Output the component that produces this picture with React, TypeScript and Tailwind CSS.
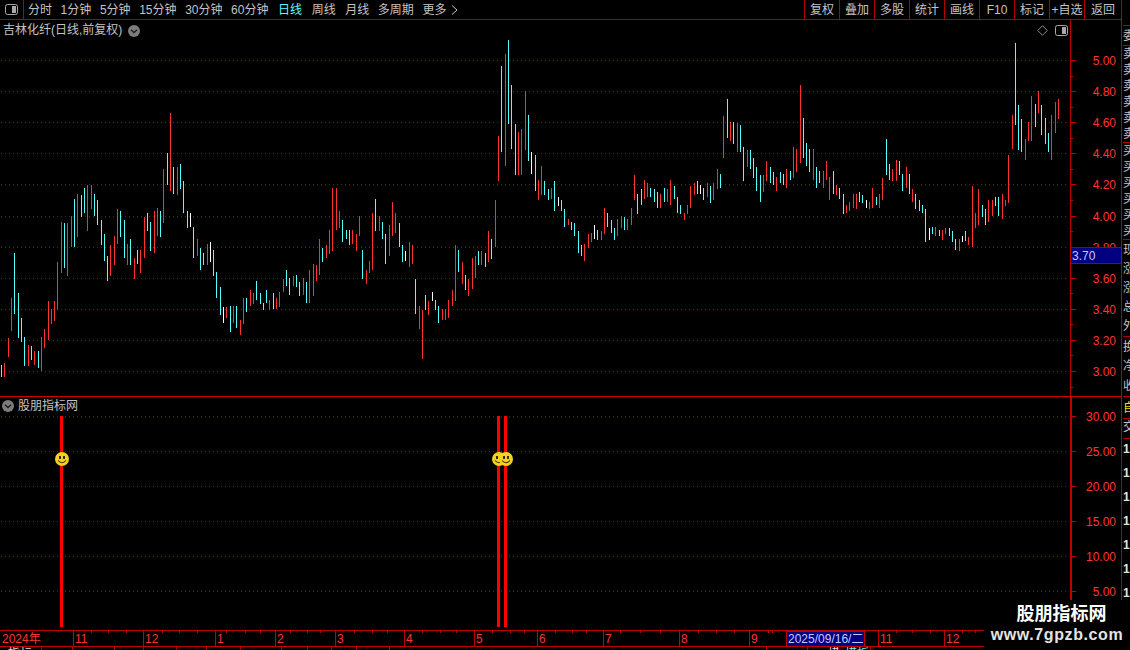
const RED = "#ff3232";
const CYAN = "#54ffff";
const GRID = "#960000";
const AXIS = "#c00000";

const FONT = "font-['Liberation_Sans','Noto_Sans_CJK_SC',sans-serif]";
const SVG_FONT = "Liberation Sans, Noto Sans CJK SC, sans-serif";

// bars read off the picture: colour, x, top, bottom in 3x crop coordinates
const BARS_A =
  "c4,780,816 r13,774,816 r25,699,756 r34,579,678 c43,444,627 c55,564,699 c64,639,711 c73,696,783 r85,720,783 c94,723,765 r103,738,780 c115,738,789 r124,696,798 r133,672,729 r145,588,705 r154,612,657 r163,588,648 r172,471,615 r184,351,504 c193,354,489 r202,354,513 r214,333,426 c223,282,426 r232,267,396 c244,270,336 c253,249,324 r262,240,378 r274,240,312 c283,267,333 c292,285,360 c304,345,420 c313,387,468 c322,453,528 r331,420,513 r343,393,480 r352,312,417 c361,318,396 c373,345,459 r382,417,480 c391,402,480 r403,459,522 c412,435,477 r421,435,504 r433,336,459 c442,324,378 c451,351,438 r463,318,444 r472,309,393 c481,318,396 r490,192,354 c502,144,240 r511,24,258 c520,186,267 r532,186,270 c541,177,252 c550,228,324 c562,318,369 w571,324,366 c580,366,459 r592,402,453 c601,429,495 c610,444,480 r622,417,480 w631,411,471 c640,435,513 c649,501,579 c661,546,630 w670,606,654 r679,606,639 c691,603,681 r700,603,654 c709,603,669 r721,645,690 r730,579,657 c739,579,621 r751,555,603 r760,564,597 c769,528,585 c781,564,597 c790,594,615 c799,555,594 r808,585,615 c820,564,612 r829,579,612 r838,561,606 r850,522,561 c859,495,543 c868,519,570 r880,513,543 c889,510,546 c898,531,573 r910,519,570 c919,531,594 r928,495,594 r940,477,573 r949,480,528 r958,402,510 c967,429,471 r979,420,459 r988,375,447 r997,249,438 r1009,249,375 r1018,318,369 c1027,345,411 c1039,375,402 c1048,375,420";
const BARS_B =
  "r7,420,462 r19,432,483 r28,378,438 c37,480,567 r49,540,582 r58,513,549 r67,369,540 c76,327,423 r88,378,423 c97,396,447 c106,432,522 r118,405,498 r127,336,438 r136,369,429 c148,399,471 c157,465,516 w166,483,513 r178,456,531 r187,465,522 c196,567,672 r208,648,717 r217,660,807 c226,615,660 r235,633,675 w247,606,633 c256,630,660 c265,648,699 r277,657,690 r286,657,690 r295,630,684 r307,600,648 r316,465,633 c325,480,546 r337,516,582 c346,555,600 r355,567,618 r367,504,597 r376,498,564 c385,483,525 r394,483,525 c406,489,531 r415,423,516 c424,447,507 r436,330,471 r445,138,273 c454,-72,186 r466,-108,228 c475,-150,102 c484,-15,177 c496,102,255 r505,126,255 r514,117,255 r526,3,180 c535,75,213 w544,186,252 c556,195,303 r565,270,330 r574,228,315 c583,273,315 c595,297,330 r604,294,327 c613,273,363 w625,321,348 c634,330,363 c643,357,411 r655,387,405 c664,396,420 c673,399,438 c685,423,489 c694,465,498 r703,462,513 r715,432,474 r724,429,456 w733,405,447 c742,420,450 r754,423,450 r763,354,432 c772,369,411 c784,390,429 c793,414,450 r802,387,438 r814,378,414 c823,381,420 r832,387,420 r844,354,405 r853,255,330 c862,312,372 c874,297,345 r883,270,327 r892,279,321 c901,294,321 c913,297,336 c922,306,354 r931,312,354 c943,294,336 r952,297,336 r961,270,345 c973,288,327 c982,321,369 c991,345,372 r1003,369,390 r1012,345,372 r1021,288,354 r1033,279,315 c1042,273,312";
const BARS_C =
  "w0,315,342 c10,324,360 r22,309,351 c31,318,369 r40,309,360 r52,267,327 c61,282,324 r70,108,234 c82,57,174 r91,126,183 c100,126,192 r112,129,216 c121,135,216 c130,201,303 r142,210,261 c151,210,267 c160,234,294 c169,261,333 c181,285,366 r190,285,336 r199,243,303 c211,261,309 c220,276,315 r229,291,333 c241,276,309 c250,282,315 r259,267,324 c271,273,300 r280,201,294 r289,207,276 r301,15,249 c310,114,234 c319,189,258 c328,207,276 r340,207,300 c349,261,324 c358,273,309 r370,273,324 r379,243,300 r388,291,360 c400,273,342 r409,315,345 c418,324,357 c430,342,402 r439,375,399 r448,366,393 r460,342,384 r469,342,387 c478,336,366 c487,345,369 w499,360,384 r508,366,387 r517,324,384 c529,351,375 r538,342,384 r547,294,360 c559,177,285 c568,252,300 r577,267,303 r589,240,303 c598,243,285 c607,282,333 r619,261,324 c628,282,342 r637,327,366 c646,342,387 c658,360,393 c667,375,399 c676,387,486 w688,444,480 c697,441,462 r706,441,468 c718,450,468 r727,450,480 r736,444,462 c748,444,468 c757,453,486 c766,477,510 r778,477,513 w787,468,486 c796,453,483 r805,471,495 r817,318,501 r826,399,444 r835,327,435 c847,375,411 c856,387,435 r865,360,426 r877,360,408 c886,351,378 c895,351,408 r907,342,417 r916,360,378 r925,225,369 r937,105,207 c946,-111,135 c955,75,210 c964,117,216 r976,177,240 r985,126,183 r994,48,183 c1006,72,141 r1015,33,99 c1024,75,165 c1036,114,192 c1045,159,216 r1054,105,240 r1066,66,159 r1075,57,117";

function parseBars(src: string, ox: number, oy: number) {
  return src.split(" ").map((s) => {
    const [x, top, bottom] = s.slice(1).split(",").map(Number);
    const fill = s[0] === "r" ? RED : s[0] === "c" ? CYAN : "#ffffff";
    return {
      x: Math.floor(ox + x / 3),
      y: Math.round(oy + top / 3),
      h: Math.round((bottom - top) / 3),
      fill,
    };
  });
}

const bars = [
  ...parseBars(BARS_A, 0, 105),
  ...parseBars(BARS_B, 350, 90),
  ...parseBars(BARS_C, 700, 80),
];

const PRICES = ["5.00", "4.80", "4.60", "4.40", "4.20", "4.00", "3.80", "3.60", "3.40", "3.20", "3.00"];
const LEVELS = ["30.00", "25.00", "20.00", "15.00", "10.00", "5.00"];
const TABS = ["分时", "1分钟", "5分钟", "15分钟", "30分钟", "60分钟"];
const BUTTONS = ["复权", "叠加", "多股", "统计", "画线", "F10", "标记", "+自选", "返回"];
const MONTHS = [
  { x: 73, label: "11" },
  { x: 143, label: "12" },
  { x: 215, label: "1" },
  { x: 275, label: "2" },
  { x: 335, label: "3" },
  { x: 404, label: "4" },
  { x: 474, label: "5" },
  { x: 537, label: "6" },
  { x: 603, label: "7" },
  { x: 679, label: "8" },
  { x: 749, label: "9" },
  { x: 878, label: "11" },
  { x: 944, label: "12" },
];
const TICKS = [91, 108, 126, 162, 179, 197, 226, 245, 260, 290, 307, 320, 354, 372, 387, 422, 440, 456, 492, 510, 524, 555, 572, 586, 620, 640, 660, 698, 716, 734, 768, 772, 815, 830, 848, 862, 896, 912, 930, 962, 975];

function Smiley({ x, y }: { x: number; y: number }) {
  return (
    <g transform={`translate(${x} ${y})`}>
      <circle r="7" fill="#f2d21e" />
      <rect x="-3" y="-3" width="2" height="3" fill="#3a2c00" />
      <rect x="1" y="-3" width="2" height="3" fill="#3a2c00" />
      <path d="M-4 1.5 Q0 6 4 1.5" fill="none" stroke="#3a2c00" strokeWidth="1.1" />
    </g>
  );
}

function PanelIcon({ className }: { className: string }) {
  return (
    <svg width="13" height="11" viewBox="0 0 13 11" className={className}>
      <rect x="0.5" y="0.5" width="12" height="10" rx="2" fill="#000" stroke="#a8a8a8" />
      <rect x="7" y="2" width="4" height="7" fill="#a8a8a8" />
    </svg>
  );
}

function RoundChevron() {
  return (
    <svg width="12" height="12" viewBox="0 0 12 12">
      <circle cx="6" cy="6" r="6" fill="#7c7c7c" />
      <path d="M3 4.8 L6 7.6 L9 4.8" fill="none" stroke="#1c1c1c" strokeWidth="1.3" />
    </svg>
  );
}

function Toolbar() {
  return (
    <div className="flex h-[20px] shrink-0 items-stretch border-b border-[#b00000] text-[12px] leading-[20px] text-[#c4c4c4]">
      <div className="flex w-[24px] items-center justify-center border-r border-[#b00000]">
        <PanelIcon className="mr-[1px]" />
      </div>
      <div className="ml-[4px] flex gap-[8.6px] whitespace-nowrap">
        {TABS.map((t) => (
          <span key={t}>{t}</span>
        ))}
        <span className="ml-[1px] text-[#54ffff]">日线</span>
        <span className="ml-[1px]">周线</span>
        <span className="ml-[1px]">月线</span>
        <span>多周期</span>
        <span className="flex items-center gap-[5px]">
          更多
          <svg width="7" height="10" viewBox="0 0 7 10">
            <path d="M1 0.5 L6 5 L1 9.5" fill="none" stroke="#c4c4c4" />
          </svg>
        </span>
      </div>
      <div className="ml-auto flex">
        {BUTTONS.map((b) => (
          <span
            key={b}
            className="w-[35px] whitespace-nowrap border-l border-[#b00000] text-center last:w-[37px]"
          >
            {b}
          </span>
        ))}
      </div>
    </div>
  );
}

function PricePane() {
  return (
    <div className="relative h-[377px] shrink-0 border-b border-[#d00000]">
      <svg width="1121" height="376" viewBox="0 20 1121 376" className="block" shapeRendering="crispEdges">
        {PRICES.map((p, i) => {
          const y = 60 + i * 31.1;
          const ry = Math.round(y);
          return (
            <g key={p}>
              <line x1="1" y1={ry + 0.5} x2="1066" y2={ry + 0.5} stroke={GRID} strokeDasharray="1 3" />
              <rect x="1070" y={ry} width="6" height="1" fill={AXIS} />
              <rect x="1070" y={Math.round(y + 15.5)} width="3" height="1" fill={AXIS} />
              <text
                x="1116"
                y={ry + 5}
                textAnchor="end"
                fontSize="12"
                fill={RED}
                fontFamily={SVG_FONT}
                shapeRendering="auto"
              >
                {p}
              </text>
            </g>
          );
        })}
        {bars.map((b, i) => (
          <rect key={i} x={b.x} y={b.y} width="1" height={b.h} fill={b.fill} />
        ))}
        <rect x="1070" y="20" width="1" height="376" fill={AXIS} />
      </svg>
      <div className="absolute left-[3px] top-[2px] flex items-center gap-[6px] text-[12px] leading-[17px] text-[#c4c4c4]">
        <span className="whitespace-nowrap">吉林化纤(日线,前复权)</span>
        <RoundChevron />
      </div>
      <svg width="11" height="11" viewBox="0 0 11 11" className="absolute left-[1037px] top-[5px]">
        <path d="M5.5 0.7 L10.3 5.5 L5.5 10.3 L0.7 5.5 Z" fill="none" stroke="#8c8c8c" />
      </svg>
      <PanelIcon className="absolute left-[1055px] top-[5px]" />
      <div className="absolute left-[1071px] top-[227px] flex h-[17px] w-[50px] items-center border-y border-[#a00000] bg-[#000080] pl-[1px] text-[12px] text-[#c8c8ff]">
        3.70
      </div>
    </div>
  );
}

function SignalPane() {
  return (
    <div className="relative h-[233px] shrink-0">
      <svg width="1121" height="233" viewBox="0 397 1121 233" className="block" shapeRendering="crispEdges">
        {LEVELS.map((l, i) => {
          const y = 416 + i * 35;
          return (
            <g key={l}>
              <line x1="1" y1={y + 0.5} x2="1066" y2={y + 0.5} stroke={GRID} strokeDasharray="1 3" />
              <rect x="1070" y={y} width="6" height="1" fill={AXIS} />
              <text
                x="1116"
                y={y + 5}
                textAnchor="end"
                fontSize="12"
                fill={RED}
                fontFamily={SVG_FONT}
                shapeRendering="auto"
              >
                {l}
              </text>
            </g>
          );
        })}
        <rect x="1070" y="397" width="2" height="233" fill={AXIS} />
        <rect x="60" y="416" width="3" height="211" fill="#ff0000" />
        <rect x="497" y="416" width="3" height="211" fill="#ff0000" />
        <rect x="504" y="416" width="3" height="211" fill="#ff0000" />
        <g shapeRendering="auto">
          <Smiley x={62} y={459} />
          <Smiley x={499} y={459} />
          <Smiley x={506} y={459} />
        </g>
      </svg>
      <div className="absolute left-[2px] top-[2px] flex items-center gap-[4px] text-[12px] leading-[14px] text-[#c4c4c4]">
        <RoundChevron />
        <span className="whitespace-nowrap">股朋指标网</span>
      </div>
    </div>
  );
}

function TimeAxis() {
  const text = { fontSize: 12, fill: RED, fontFamily: SVG_FONT, shapeRendering: "auto" as const };
  return (
    <svg width="1121" height="17" viewBox="0 630 1121 17" className="block shrink-0" shapeRendering="crispEdges">
      <rect x="0" y="630" width="1121" height="1" fill={AXIS} />
      <rect x="0" y="646" width="1121" height="1" fill={AXIS} />
      {TICKS.map((x) => (
        <rect key={x} x={x} y="631" width="1" height="2" fill={AXIS} />
      ))}
      <text x="2" y="643" {...text}>
        2024年
      </text>
      {MONTHS.map((m) => (
        <g key={m.x}>
          <rect x={m.x} y="631" width="1" height="15" fill={AXIS} />
          <text x={m.x + 2} y="643" {...text}>
            {m.label}
          </text>
        </g>
      ))}
      <rect x="786" y="631" width="78" height="15" fill="#000080" stroke={AXIS} />
      <text x="788" y="643" fontSize="12" fill="#c8c8ff" fontFamily={SVG_FONT} shapeRendering="auto">
        2025/09/16/二
      </text>
    </svg>
  );
}

function BottomStrip() {
  const widths = [42, 31, 42, 29, 33, 30, 34, 41, 26, 24, 25, 33, 377, 41];
  return (
    <div className="flex h-[3px] overflow-hidden text-[12px] leading-[14px] text-[#dddddd]">
      {widths.map((w, i) => (
        <div
          key={i}
          style={{ width: w }}
          className="shrink-0 overflow-hidden whitespace-nowrap border-r border-[#b00000] pl-[8px]"
        >
          {i === 0 ? "指标" : ""}
        </div>
      ))}
      <div className="w-[31px] shrink-0 overflow-hidden whitespace-nowrap border-r border-[#b00000] pl-[20px]">
        模
      </div>
      <div className="w-[32px] shrink-0 overflow-hidden whitespace-nowrap border-r border-[#b00000] pl-[6px] text-[#54ffff]">
        模板
      </div>
    </div>
  );
}

function SideRows({ items, className }: { items: string[]; className: string }) {
  return (
    <div className={`flex flex-col justify-around overflow-hidden border-b border-[#b00000] ${className}`}>
      {items.map((t, i) => (
        <span key={i} className="whitespace-nowrap leading-[14px]">
          {t}
        </span>
      ))}
    </div>
  );
}

function SidePanel() {
  return (
    <div className="w-[9px] shrink-0 overflow-hidden border-l border-[#b00000] pl-[1px] text-[12px] leading-[16px] text-[#c4c4c4]">
      <div className="h-[26px] border-b border-[#b00000]" />
      <SideRows items={["委比"]} className="h-[20px]" />
      <SideRows items={["卖六", "卖五", "卖四", "卖三", "卖二", "卖一"]} className="h-[97px]" />
      <SideRows items={["买一", "买二", "买三", "买四", "买五", "买六"]} className="h-[97px]" />
      <SideRows items={["现手", "涨跌", "涨幅", "总手", "外盘"]} className="h-[97px]" />
      <SideRows items={["换手", "净资", "收益"]} className="h-[60px]" />
      <div className="mt-[3px] h-[19px] whitespace-nowrap border-b border-[#b00000] text-[#e8e800]">自选</div>
      <div className="h-[20px] whitespace-nowrap border-b border-[#b00000]">交易</div>
      <div className="flex flex-col gap-[8px] pt-[2px] font-bold text-[#e0e0e0]">
        {["1", "1", "1", "1", "1", "1", "1"].map((n, i) => (
          <span key={i}>{n}</span>
        ))}
      </div>
    </div>
  );
}

export default function App() {
  return (
    <div className={`relative flex h-[650px] w-[1130px] overflow-hidden bg-black ${FONT}`}>
      <div className="flex w-[1121px] shrink-0 flex-col">
        <Toolbar />
        <PricePane />
        <SignalPane />
        <TimeAxis />
        <BottomStrip />
      </div>
      <SidePanel />
      <div className="absolute bottom-0 left-[984px] right-0 top-[600px] flex flex-col items-center bg-black pt-[3px] font-bold text-white">
        <span className="ml-[9px] text-[18px] leading-[22px]">股朋指标网</span>
        <span className="whitespace-nowrap text-[16px] leading-[19px] tracking-[0.6px] text-[#e4e4e4]">
          www.7gpzb.com
        </span>
      </div>
    </div>
  );
}
